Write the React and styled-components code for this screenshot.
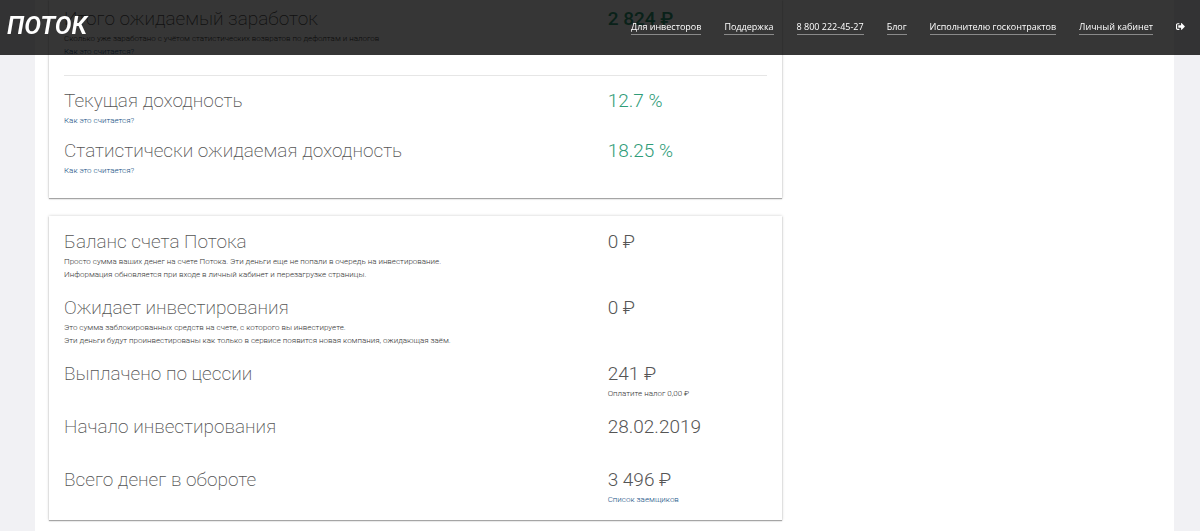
import React from 'react';
import styled, { createGlobalStyle } from 'styled-components';
import { FaSignOutAlt } from 'react-icons/fa';


const GlobalStyle = createGlobalStyle`
  * {
    box-sizing: border-box;
  }

  body {
    margin: 0;
    background: #f1f1f4;
    color: #555;
    font-family: Roboto, "Liberation Sans", sans-serif;
    font-weight: 300;
    overflow: hidden;
  }
`;


const Header = styled.header`
  position: fixed;
  top: 0;
  left: 0;
  right: 0;
  display: flex;
  align-items: center;
  justify-content: space-between;
  height: 55px;
  padding: 0 15px 2px 7px;
  background: rgba(0, 0, 0, 0.79);
`;


const Logo = styled.a`
  color: #fff;
  font-size: 25px;
  font-style: italic;
  font-weight: 600;
  line-height: 28px;
  padding-bottom: 2px;
  text-decoration: none;
`;


const Nav = styled.nav`
  display: flex;
  align-items: center;
  gap: 23px;
`;


const NavLink = styled.a`
  color: #fff;
  border-bottom: 1px solid #8a8a8a;
  font-family: "Open Sans", Roboto, sans-serif;
  font-size: 9px;
  font-weight: 500;
  line-height: 15px;
  text-decoration: none;
  white-space: nowrap;
`;


const LogoutButton = styled.button`
  display: flex;
  padding: 0;
  border: 0;
  background: none;
  color: #fff;
  font-size: 9px;
`;


const Page = styled.main`
  display: grid;
  grid-template-columns: 2fr 1fr;
  gap: 12px;
  min-height: 100vh;
  margin: 0 26px 0 35px;
  padding: 0 14px 11px;
  background: #fff;
`;


const Cards = styled.div`
  display: flex;
  flex-direction: column;
  gap: 18px;
`;


const Card = styled.section`
  display: flex;
  flex-direction: column;
  gap: ${({ $gap }) => $gap}px;
  padding: ${({ $padding }) => $padding};
  box-shadow: 0 1px 1px rgba(0, 0, 0, 0.3), 0 0 3px rgba(0, 0, 0, 0.2);
`;


const Row = styled.div`
  display: grid;
  grid-template-columns: 1fr 159px;
  min-height: 39px;
`;


const Title = styled.h2`
  margin: 0;
  font-size: 19px;
  font-weight: 200;
  line-height: 26px;
`;


const Value = styled.div`
  color: ${({ $green }) => ($green ? '#2f9c78' : 'inherit')};
  font-size: 19px;
  font-weight: ${({ $strong }) => ($strong ? 500 : 300)};
  line-height: 26px;
`;


const Note = styled.p`
  margin: 0;
  color: #333;
  font-size: 8px;
  line-height: 13px;
`;


const NoteLink = styled.a`
  color: #0f4c81;
  text-decoration: none;
`;


const Divider = styled.hr`
  width: 100%;
  margin: 6px 0 1px;
  border: 0;
  border-top: 1px solid #e6e6e6;
`;


const links = [
  'Для инвесторов',
  'Поддержка',
  '8 800 222-45-27',
  'Блог',
  'Исполнителю госконтрактов',
  'Личный кабинет',
];


const Stat = ({ title, value, notes = [], link, valueNote, valueLink, green, strong }) => (
  <Row>
    <div>
      <Title>{title}</Title>
      {notes.map(note => <Note key={note}>{note}</Note>)}
      {link && <Note><NoteLink href="#">{link}</NoteLink></Note>}
    </div>
    <div>
      <Value $green={green} $strong={strong}>{value}</Value>
      {valueNote && <Note>{valueNote}</Note>}
      {valueLink && <Note><NoteLink href="#">{valueLink}</NoteLink></Note>}
    </div>
  </Row>
);


const App = () => (
  <>
    <GlobalStyle />

    <Page>
      <Cards>
        <Card $gap={11} $padding="6px 15px 21px">
          <Stat
            title="Итого ожидаемый заработок"
            value="2 824 ₽"
            notes={['Сколько уже заработано с учётом статистических возвратов по дефолтам и налогов']}
            link="Как это считается?"
            green
            strong
          />
          <Divider />
          <Stat title="Текущая доходность" value="12.7 %" link="Как это считается?" green />
          <Stat title="Статистически ожидаемая доходность" value="18.25 %" link="Как это считается?" green />
        </Card>

        <Card $gap={14} $padding="13px 15px 14px">
          <Stat
            title="Баланс счета Потока"
            value="0 ₽"
            notes={[
              'Просто сумма ваших денег на счете Потока. Эти деньги еще не попали в очередь на инвестирование.',
              'Информация обновляется при входе в личный кабинет и перезагрузке страницы.',
            ]}
          />
          <Stat
            title="Ожидает инвестирования"
            value="0 ₽"
            notes={[
              'Это сумма заблокированных средств на счете, с которого вы инвестируете.',
              'Эти деньги будут проинвестированы как только в сервисе появится новая компания, ожидающая заём.',
            ]}
          />
          <Stat title="Выплачено по цессии" value="241 ₽" valueNote="Оплатите налог 0,00 ₽" />
          <Stat title="Начало инвестирования" value="28.02.2019" />
          <Stat title="Всего денег в обороте" value="3 496 ₽" valueLink="Список заемщиков" />
        </Card>
      </Cards>
    </Page>

    <Header>
      <Logo href="#">ПОТОК</Logo>
      <Nav>
        {links.map(link => <NavLink key={link} href="#">{link}</NavLink>)}
        <LogoutButton aria-label="Выйти"><FaSignOutAlt /></LogoutButton>
      </Nav>
    </Header>
  </>
);


export default App;
